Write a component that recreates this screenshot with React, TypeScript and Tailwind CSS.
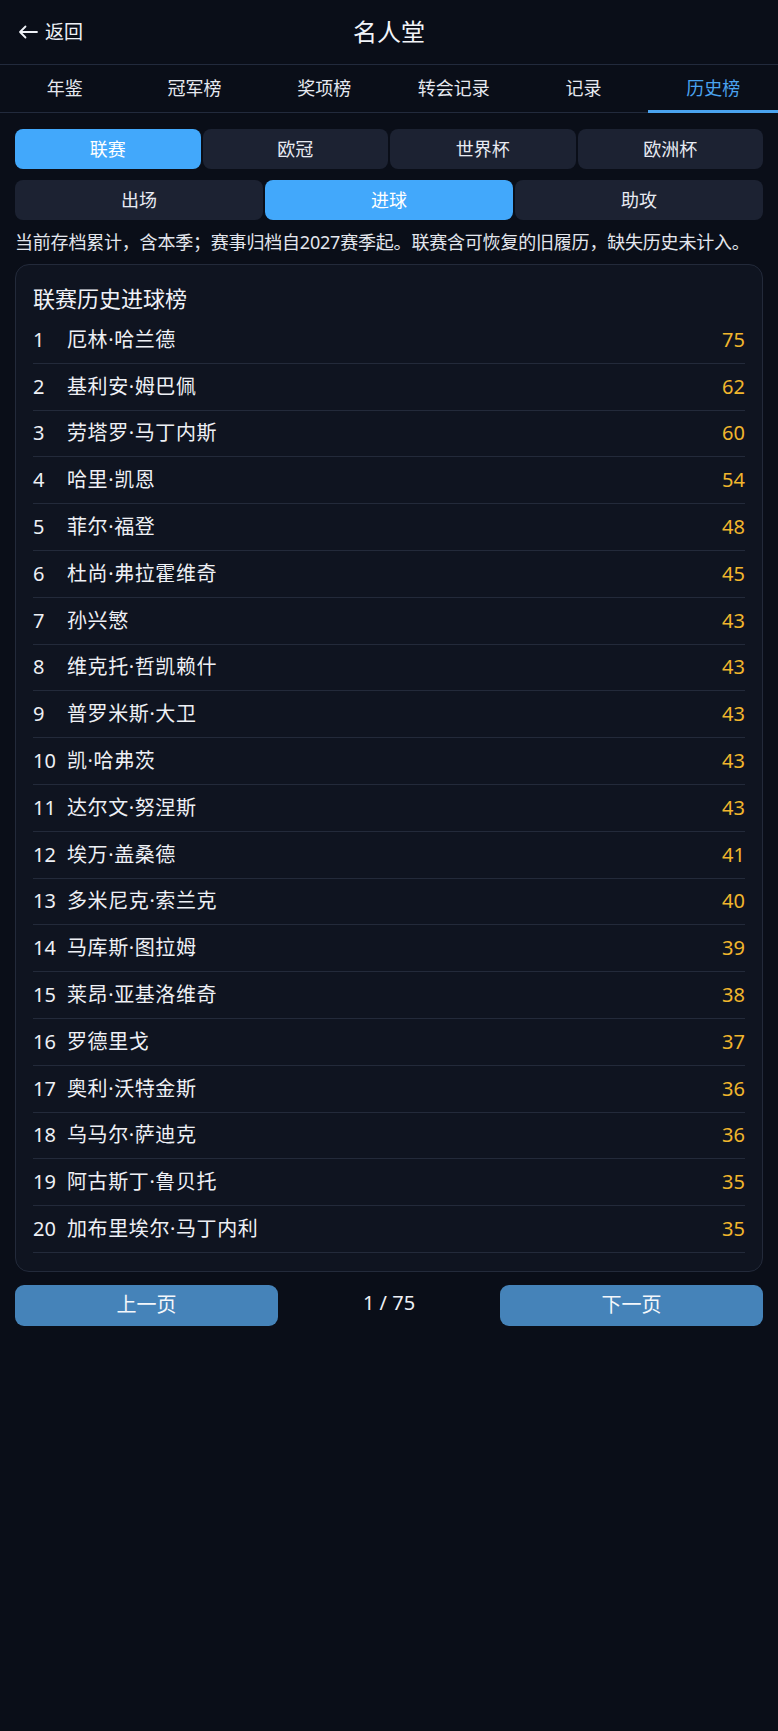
import { useState } from 'react';

const tabs = ['年鉴', '冠军榜', '奖项榜', '转会记录', '记录', '历史榜'];
const comps = ['联赛', '欧冠', '世界杯', '欧洲杯'];
const stats = ['出场', '进球', '助攻'];

const rows: [string, number][] = [
  ['厄林·哈兰德', 75],
  ['基利安·姆巴佩', 62],
  ['劳塔罗·马丁内斯', 60],
  ['哈里·凯恩', 54],
  ['菲尔·福登', 48],
  ['杜尚·弗拉霍维奇', 45],
  ['孙兴慜', 43],
  ['维克托·哲凯赖什', 43],
  ['普罗米斯·大卫', 43],
  ['凯·哈弗茨', 43],
  ['达尔文·努涅斯', 43],
  ['埃万·盖桑德', 41],
  ['多米尼克·索兰克', 40],
  ['马库斯·图拉姆', 39],
  ['莱昂·亚基洛维奇', 38],
  ['罗德里戈', 37],
  ['奥利·沃特金斯', 36],
  ['乌马尔·萨迪克', 36],
  ['阿古斯丁·鲁贝托', 35],
  ['加布里埃尔·马丁内利', 35],
];

export default function App() {
  const [tab, setTab] = useState(5);
  const [comp, setComp] = useState(0);
  const [stat, setStat] = useState(1);

  return (
    <div className="min-h-[1731px] w-full bg-[#0a0e18] text-[#e8ebf2] font-['Noto_Sans','Noto_Sans_CJK_SC',sans-serif]">
      {/* Header */}
      <header className="relative flex h-[65px] items-center border-b border-[#222a3c] px-[18px]">
        <button className="flex items-center gap-[7px] text-[19px] text-[#eef1f6]">
          <svg width="20" height="14" viewBox="0 0 20 14" fill="none" stroke="currentColor" strokeWidth="1.8" strokeLinecap="round" strokeLinejoin="round">
            <path d="M19 7H2M7.5 1.5L2 7l5.5 5.5" />
          </svg>
          返回
        </button>
        <h1 className="absolute left-1/2 -translate-x-1/2 text-[24px] font-normal text-[#f2f4f8]">名人堂</h1>
      </header>

      {/* Tabs */}
      <nav className="grid h-[48px] grid-cols-6 border-b border-[#222a3c]">
        {tabs.map((t, i) => (
          <button
            key={t}
            onClick={() => setTab(i)}
            className={`relative flex items-center justify-center text-[18px] ${
              i === tab ? 'text-[#4aa3ef]' : 'text-[#e6e9f0]'
            }`}
          >
            {t}
            {i === tab && <span className="absolute inset-x-0 -bottom-px h-[3px] bg-[#4aa3ef]" />}
          </button>
        ))}
      </nav>

      <main className="px-[15px] pt-[16px]">
        {/* Competition switch */}
        <div className="grid grid-cols-4 gap-[2px]">
          {comps.map((c, i) => (
            <button
              key={c}
              onClick={() => setComp(i)}
              className={`h-[40px] rounded-[8px] text-[18px] ${
                i === comp ? 'bg-[#42a8fb] text-white' : 'bg-[#1c2232] text-[#e8ebf2]'
              }`}
            >
              {c}
            </button>
          ))}
        </div>

        {/* Stat switch */}
        <div className="mt-[11px] grid grid-cols-3 gap-[2px]">
          {stats.map((s, i) => (
            <button
              key={s}
              onClick={() => setStat(i)}
              className={`h-[40px] rounded-[8px] text-[18px] ${
                i === stat ? 'bg-[#42a8fb] text-white' : 'bg-[#1c2232] text-[#e8ebf2]'
              }`}
            >
              {s}
            </button>
          ))}
        </div>

        <p className="mt-[10px] text-[18px] leading-[24px] tracking-[-0.2px] text-[#e3e6ed]">
          当前存档累计，含本季；赛事归档自2027赛季起。联赛含可恢复的旧履历，缺失历史未计入。
        </p>

        {/* Leaderboard card */}
        <section className="mt-[10px] rounded-[14px] border border-[#232a3a] bg-[#0f1420] px-[17px] pb-[18px] pt-[17px]">
          <h2 className="text-[22px] leading-[32px] text-[#f0f2f7]">联赛历史进球榜</h2>
          <ul className="mt-[3px]">
            {rows.map(([name, goals], i) => (
              <li key={name} className="flex h-[46.8px] items-center border-b border-[#232a3a] text-[20px]">
                <span className="min-w-[34px] shrink-0 pr-[4px] text-[#eef0f5]">{i + 1}</span>
                <span className="flex-1 tracking-[0.6px] text-[#eef0f5]">{name}</span>
                <span className="text-[#f1b62d]">{goals}</span>
              </li>
            ))}
          </ul>
        </section>

        {/* Pagination */}
        <div className="mt-[13px] flex items-start justify-between">
          <button className="h-[41px] w-[263px] rounded-[9px] bg-[#4583b9] text-[20px] text-[#f4f7fb]">上一页</button>
          <span className="text-[20px] leading-[36px] text-[#eef0f5]">1 / 75</span>
          <button className="h-[41px] w-[263px] rounded-[9px] bg-[#4583b9] text-[20px] text-[#f4f7fb]">下一页</button>
        </div>
      </main>
    </div>
  );
}
